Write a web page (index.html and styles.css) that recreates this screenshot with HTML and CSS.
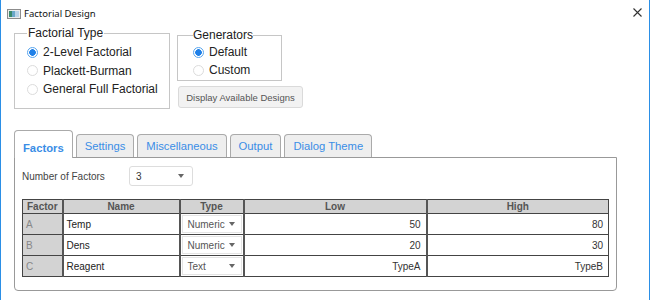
FILE: index.html
```html
<!DOCTYPE html>
<html>
<head>
<meta charset="utf-8">
<title>Factorial Design</title>
<link rel="stylesheet" href="styles.css">
</head>
<body>
<div class="window">
  <div class="titlebar">
    <svg class="app-icon" width="14" height="10" viewBox="0 0 14 10">
      <rect x="0.5" y="0.5" width="13" height="9" fill="#ececec" stroke="#8c8c8c"/>
      <rect x="2" y="2" width="3" height="6" fill="#3a8a6c"/>
      <rect x="5" y="2" width="3" height="6" fill="#6aa7c9"/>
      <rect x="8" y="2" width="4" height="6" fill="#b9d3e8"/>
    </svg>
    <span class="title">Factorial Design</span>
    <svg class="close" width="9" height="9" viewBox="0 0 9 9">
      <path d="M0.5 0.5 L8.5 8.5 M8.5 0.5 L0.5 8.5" stroke="#333" stroke-width="1.1" fill="none"/>
    </svg>
  </div>
  <div class="content">
    <div class="top">
      <fieldset class="group ftype">
        <legend>Factorial Type</legend>
        <div class="radio"><span class="dot on"></span>2-Level Factorial</div>
        <div class="radio"><span class="dot"></span>Plackett-Burman</div>
        <div class="radio"><span class="dot"></span>General Full Factorial</div>
      </fieldset>
      <div class="gencol">
        <fieldset class="group gen">
          <legend>Generators</legend>
          <div class="radio"><span class="dot on"></span>Default</div>
          <div class="radio"><span class="dot"></span>Custom</div>
        </fieldset>
        <button class="btn">Display Available Designs</button>
      </div>
    </div>
    <div class="tabs">
      <div class="tab active">Factors</div>
      <div class="tab">Settings</div>
      <div class="tab">Miscellaneous</div>
      <div class="tab">Output</div>
      <div class="tab">Dialog Theme</div>
    </div>
    <div class="panel">
      <div class="nf">
        <span class="lbl">Number of Factors</span>
        <div class="select"><span>3</span><span class="arrow"></span></div>
      </div>
      <table class="grid">
        <colgroup>
          <col class="c1"><col class="c2"><col class="c3"><col class="c4"><col class="c5">
        </colgroup>
        <thead>
          <tr><th>Factor</th><th>Name</th><th>Type</th><th>Low</th><th>High</th></tr>
        </thead>
        <tbody>
          <tr><td class="fac">A</td><td>Temp</td><td class="type"><div class="tsel"><span>Numeric</span><span class="arrow"></span></div></td><td class="num">50</td><td class="num">80</td></tr>
          <tr><td class="fac">B</td><td>Dens</td><td class="type"><div class="tsel"><span>Numeric</span><span class="arrow"></span></div></td><td class="num">20</td><td class="num">30</td></tr>
          <tr><td class="fac">C</td><td>Reagent</td><td class="type"><div class="tsel"><span>Text</span><span class="arrow"></span></div></td><td class="num">TypeA</td><td class="num">TypeB</td></tr>
        </tbody>
      </table>
    </div>
  </div>
</div>
</body>
</html>
```
FILE: styles.css
```css
* { box-sizing: border-box; }
html, body { margin: 0; padding: 0; background: #fff; }
body { font-family: "Liberation Sans", Arial, sans-serif; color: #222; }

.window {
  width: 650px;
  height: 300px;
  border-left: 1px solid #2b8fe6;
  border-right: 1px solid #2b8fe6;
  background: #fff;
  overflow: hidden;
}

.titlebar {
  height: 26px;
  display: flex;
  align-items: center;
  padding: 0 7px 0 6px;
}
.app-icon { display: block; margin-top: 1px; }
.title {
  font-family: "Noto Sans", sans-serif;
  font-size: 9.5px;
  color: #111;
  margin-left: 3px;
}
.close { margin-left: auto; display: block; margin-top: -1px; }

.content { padding-left: 13px; }

.top { display: flex; gap: 7px; align-items: flex-start; }

.group {
  margin: 0;
  border: 1px solid #c6c6c6;
  padding: 0;
  min-width: 0;
}
.group legend {
  font-size: 12px;
  line-height: 14px;
  padding: 0 1px;
  color: #222;
}
.ftype { width: 156px; height: 83px; padding: 3px 0 0 12px; }
.gen { width: 105px; height: 53px; margin-top: 2px; padding: 1px 0 0 15px; }
.gen legend { padding: 0; }

.radio {
  display: flex;
  align-items: center;
  gap: 5px;
  height: 18.5px;
  font-size: 12px;
  color: #222;
}
.gen .radio { height: 18px; }
.dot {
  width: 11px;
  height: 11px;
  border-radius: 50%;
  border: 1px solid #dcdcdc;
  background: #fff;
  flex: none;
}
.dot.on {
  border-color: #5aa6ee;
  background: radial-gradient(circle, #1f80e8 0 3px, #fff 3.6px);
}

.btn {
  display: block;
  margin: 5px 0 0 1px;
  width: 125px;
  height: 22px;
  padding: 0;
  font-family: "Liberation Sans", Arial, sans-serif;
  font-size: 9.5px;
  color: #555;
  background: #f2f2f2;
  border: 1px solid #dadada;
  border-radius: 3px;
}

.tabs {
  display: flex;
  align-items: flex-end;
  gap: 3px;
  height: 27px;
  margin-top: 21px;
  position: relative;
  z-index: 1;
}
.tab {
  height: 23px;
  padding: 0 8px;
  border: 1px solid #aaa;
  border-bottom: 0;
  border-radius: 4px 4px 0 0;
  background: #eee;
  color: #3a8de6;
  font-size: 11.25px;
  display: flex;
  align-items: center;
}
.tab.active {
  height: 28px;
  margin-bottom: -1px;
  background: #fff;
  font-weight: bold;
  padding-top: 6px;
}

.panel {
  width: 603px;
  height: 134px;
  border: 1px solid #999;
  border-radius: 0 0 4px 4px;
  padding: 8px 8px 0 7px;
}

.nf {
  display: flex;
  align-items: center;
  height: 20px;
  font-size: 10px;
  color: #444;
}
.nf .lbl { width: 107px; }
.select {
  width: 64px;
  height: 20px;
  border: 1px solid #ddd;
  border-radius: 3px;
  display: flex;
  align-items: center;
  justify-content: space-between;
  padding: 0 8px 0 6px;
  color: #333;
}
.arrow {
  width: 0;
  height: 0;
  border-left: 3px solid transparent;
  border-right: 3px solid transparent;
  border-top: 4px solid #666;
}

.grid {
  margin-top: 13px;
  border-collapse: collapse;
  table-layout: fixed;
  width: 586px;
  font-size: 10px;
  color: #222;
}
.c1 { width: 40px; }
.c2 { width: 117px; }
.c3 { width: 64px; }
.c4 { width: 183px; }
.c5 { width: 182px; }
.grid th, .grid td {
  border: 1px solid #444;
  padding: 0 3px;
  white-space: nowrap;
  overflow: hidden;
}
.grid th + th, .grid td + td { border-left: 2px solid #555; }
.grid th {
  height: 14px;
  background: #d3d3d3;
  color: #555;
  font-weight: bold;
  text-align: center;
}
.grid td { height: 19px; }
.grid td.fac { background: #d3d3d3; color: #888; }
.grid td.num { text-align: right; padding-right: 5px; color: #333; }
.grid td.type { padding: 1px; }
.tsel {
  height: 18px;
  border: 1px solid #e4e4e4;
  background: #fff;
  display: flex;
  align-items: center;
  justify-content: space-between;
  padding: 0 6px 0 5px;
  font-size: 10px;
  color: #555;
}
```
